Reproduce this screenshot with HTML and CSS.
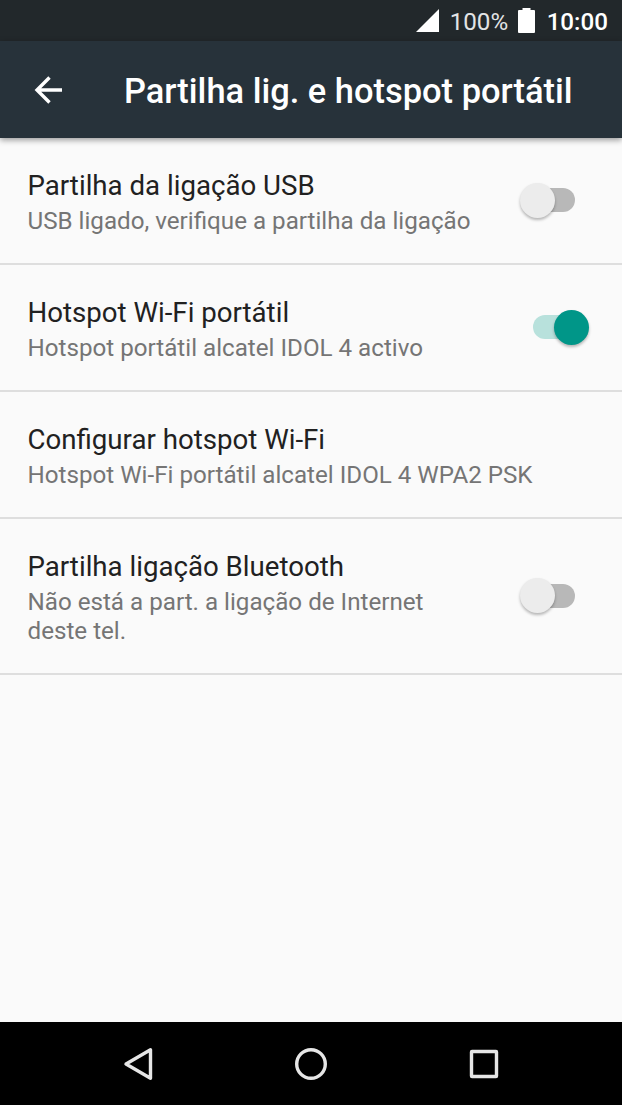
FILE: index.html
```html
<!DOCTYPE html>
<html lang="pt">

<head>
  <meta charset="UTF-8">
  <meta name="viewport" content="width=device-width, initial-scale=1.0">
  <title>Partilha lig. e hotspot portátil</title>
  <link rel="stylesheet" href="styles.css">
</head>

<body>
  <div class="status-bar">
    <svg class="signal" width="23" height="23" viewBox="0 0 23 23"><path d="M23 0v23H0z" fill="#fff"/></svg>
    <span class="battery-level">100%</span>
    <svg class="battery" width="17" height="25" viewBox="0 0 17 25"><path d="M4.500 0h8v2H16a1 1 0 0 1 1 1v21a1 1 0 0 1-1 1H1a1 1 0 0 1-1-1V3a1 1 0 0 1 1-1h3.500z" fill="#fff"/></svg>
    <span class="clock">10:00</span>
  </div>

  <header class="app-bar">
    <svg class="back" width="28" height="28" viewBox="0 0 28 28"><path d="M15.500 1.500L3 14l12.500 12.500M3 14h25" fill="none" stroke="#fff" stroke-width="3.400"/></svg>
    <h1>Partilha lig. e hotspot portátil</h1>
  </header>

  <main class="settings">
    <div class="item">
      <div class="item-text">
        <div class="item-title">Partilha da ligação USB</div>
        <div class="item-summary">USB ligado, verifique a partilha da ligação</div>
      </div>
      <div class="switch"><span class="thumb"></span></div>
    </div>

    <div class="item">
      <div class="item-text">
        <div class="item-title">Hotspot Wi-Fi portátil</div>
        <div class="item-summary">Hotspot portátil alcatel IDOL 4 activo</div>
      </div>
      <div class="switch on"><span class="thumb"></span></div>
    </div>

    <div class="item">
      <div class="item-text">
        <div class="item-title">Configurar hotspot Wi-Fi</div>
        <div class="item-summary">Hotspot Wi-Fi portátil alcatel IDOL 4 WPA2 PSK</div>
      </div>
    </div>

    <div class="item">
      <div class="item-text">
        <div class="item-title">Partilha ligação Bluetooth</div>
        <div class="item-summary">Não está a part. a ligação de Internet<br>deste tel.</div>
      </div>
      <div class="switch"><span class="thumb"></span></div>
    </div>
  </main>

  <nav class="nav-bar">
    <svg width="34" height="34" viewBox="0 0 34 34"><path d="M29.500 2.800v28.400L5 17z"/></svg>
    <svg width="34" height="34" viewBox="0 0 34 34"><circle cx="17" cy="17" r="14.300"/></svg>
    <svg width="34" height="34" viewBox="0 0 34 34"><rect x="4.500" y="4.500" width="25" height="25" rx="0.500"/></svg>
  </nav>
</body>

</html>
```

FILE: styles.css
```css
* {
  box-sizing: border-box;
}

body {
  margin: 0;
  height: 1105px;
  display: flex;
  flex-direction: column;
  background-color: #fafafa;
  font-family: Roboto, sans-serif;
  overflow: hidden;
}

.status-bar {
  height: 41px;
  padding: 2px 14px 0 0;
  display: flex;
  align-items: center;
  justify-content: flex-end;
  background-color: #22282b;
  color: #fff;
  font-size: 24.2px;
}

.signal {
  margin: -3px 10.5px 0 0;
}

.battery-level {
  margin-right: 9.5px;
  color: #e3e4e5;
}

.battery {
  margin: -2px 12px 0 0;
}

.clock {
  font-weight: 500;
}

.app-bar {
  height: 97px;
  padding: 0 34px;
  display: flex;
  align-items: center;
  background-color: #27323a;
  color: #fff;
  box-shadow: 0 2px 6px rgba(0, 0, 0, 0.4);
}

.back {
  margin-right: 62px;
}

.app-bar h1 {
  margin: 3px 0 0;
  font-size: 34.45px;
  font-weight: 500;
  white-space: nowrap;
}

.settings {
  flex: 1;
}

.item {
  padding: 29px 47px 27.5px 28px;
  display: flex;
  align-items: center;
  justify-content: space-between;
  border-bottom: 2px solid #dedede;
}

.item-text {
  margin-left: -0.5px;
  white-space: nowrap;
}

.item-title {
  margin-bottom: 3px;
  font-size: 27.65px;
  line-height: 37px;
  color: #212121;
}

.item-summary {
  font-size: 24.18px;
  line-height: 28.5px;
  color: #757575;
}

.switch {
  width: 42px;
  height: 24px;
  margin-bottom: 2px;
  border-radius: 12px;
  background-color: #b8b8b8;
  display: flex;
  align-items: center;
}

.thumb {
  flex: none;
  width: 35px;
  height: 35px;
  margin-left: -13.5px;
  border-radius: 50%;
  background-color: #ececec;
  box-shadow: 0 2px 3px rgba(0, 0, 0, 0.28);
}

.switch.on {
  background-color: #b8e1dc;
}

.switch.on .thumb {
  margin-left: 20.5px;
  background-color: #009688;
}

.nav-bar {
  height: 83px;
  padding: 0 121px;
  display: flex;
  align-items: center;
  justify-content: space-between;
  background-color: #000;
}

.nav-bar svg {
  fill: none;
  stroke: #e6e6e6;
  stroke-width: 3.4;
  stroke-linejoin: round;
}
```
